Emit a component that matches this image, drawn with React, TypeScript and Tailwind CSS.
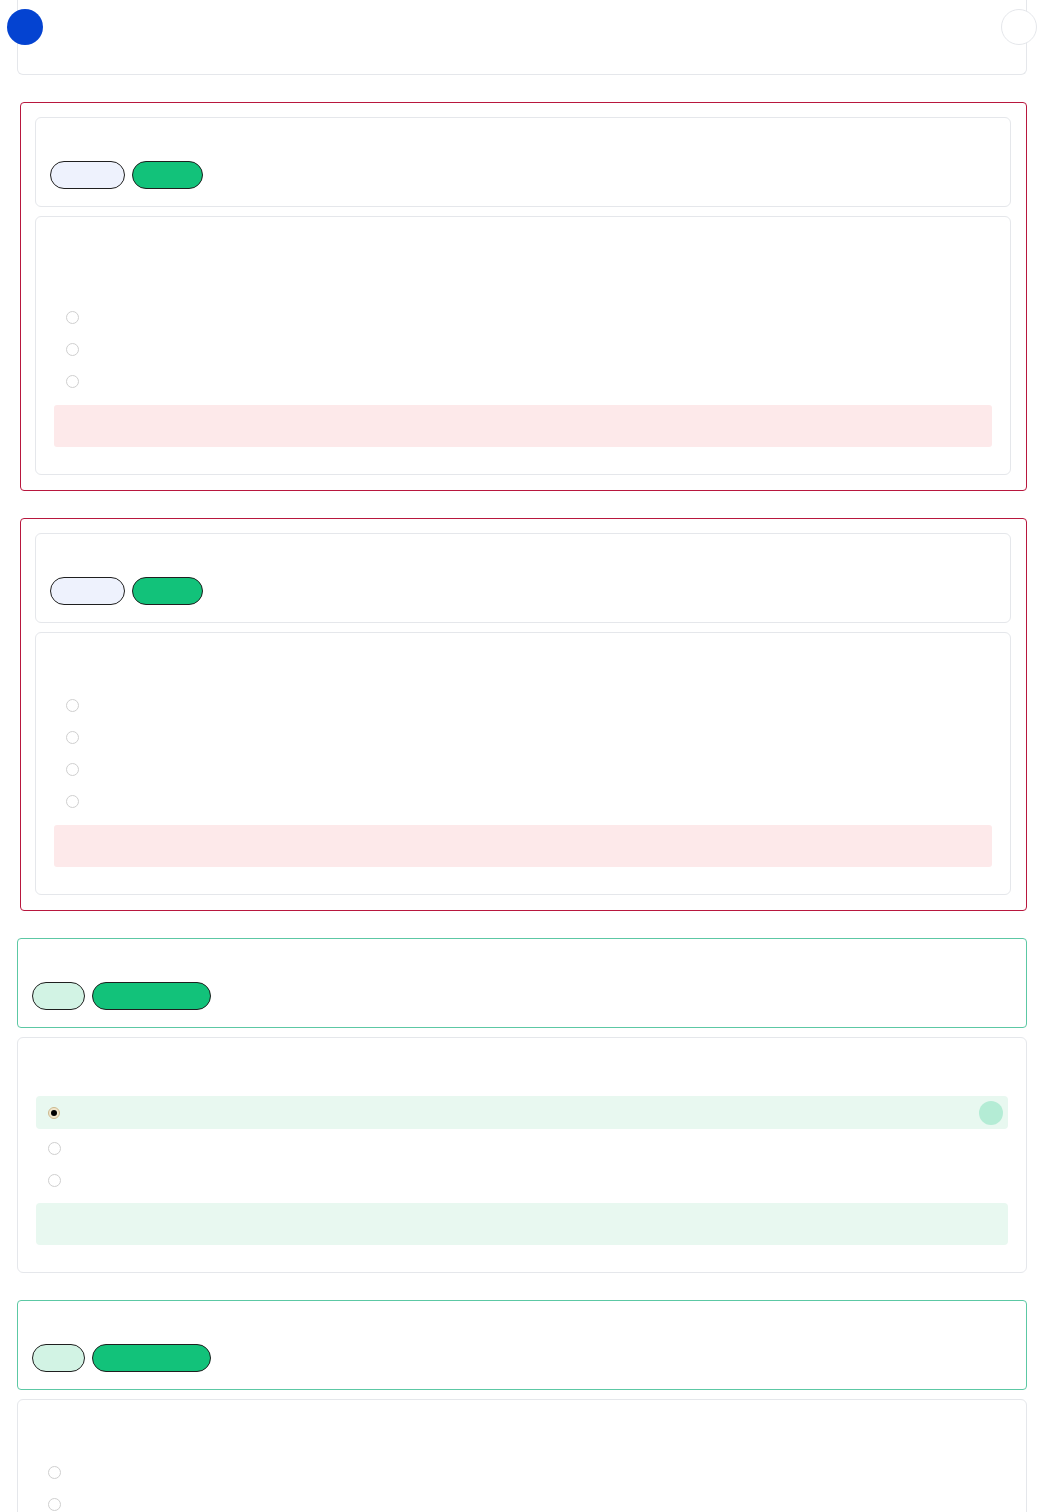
import React from "react";

type Tone = "wrong" | "right";

type Question = {
  tone: Tone;
  spacer: string;
  options: number;
  selected?: boolean;
};

const questions: Question[] = [
  { tone: "wrong", spacer: "h-[66px]", options: 3 },
  { tone: "wrong", spacer: "h-[38px]", options: 4 },
  { tone: "right", spacer: "h-[40px]", options: 3, selected: true },
  { tone: "right", spacer: "h-[38px]", options: 4 },
];

const Radio = ({ checked }: { checked?: boolean }) =>
  checked ? (
    <span className="flex h-[12px] w-[12px] items-center justify-center rounded-full border border-[#cdb98e] bg-[#f1e6cc]">
      <span className="h-[6px] w-[6px] rounded-full bg-black" />
    </span>
  ) : (
    <span className="h-[13px] w-[13px] rounded-full border border-[#cfcfcf] bg-white" />
  );

const QuestionHead = ({ tone }: { tone: Tone }) => (
  <div
    className={
      tone === "wrong"
        ? "h-[90px] rounded-md border border-gray-200 bg-white pl-[14px] pt-[43px]"
        : "h-[90px] rounded-[4px] border border-[#5cc8a4] bg-white pl-[14px] pt-[43px]"
    }
  >
    <div className="flex gap-[7px]">
      {tone === "wrong" ? (
        <>
          <span className="h-[28px] w-[75px] rounded-full border border-[#1f1f1f] bg-[#eef2fd]" />
          <span className="h-[28px] w-[71px] rounded-full border border-[#1f1f1f] bg-[#12c27a]" />
        </>
      ) : (
        <>
          <span className="h-[28px] w-[53px] rounded-full border border-[#1f1f1f] bg-[#d2f3e4]" />
          <span className="h-[28px] w-[119px] rounded-full border border-[#1f1f1f] bg-[#12c27a]" />
        </>
      )}
    </div>
  </div>
);

const OptionsCard = ({ q }: { q: Question }) => (
  <div className="rounded-md border border-gray-200 bg-white px-[18px] pb-[27px] pt-[18px]">
    <div className={q.spacer} />
    <div className="flex flex-col">
      {Array.from({ length: q.options }).map((_, i) =>
        q.selected && i === 0 ? (
          <div
            key={i}
            className="mb-[3px] flex h-[33px] items-center justify-between rounded-[4px] bg-[#e8f8f0] pl-[12px] pr-[5px]"
          >
            <Radio checked />
            <span className="h-[24px] w-[24px] rounded-full bg-[#b4ecd5]" />
          </div>
        ) : (
          <div key={i} className="flex h-8 items-center pl-[12px]">
            <Radio />
          </div>
        )
      )}
    </div>
    <div
      className={
        q.tone === "wrong"
          ? "mt-2 h-[42px] rounded-[3px] bg-[#fde9ea]"
          : "mt-[7px] h-[42px] rounded-[4px] bg-[#e8f8f0]"
      }
    />
  </div>
);

export default function App() {
  return (
    <div className="relative min-h-screen bg-white px-[17px] pb-10 font-['Liberation_Sans',sans-serif]">
      <span className="absolute left-[7px] top-[9px] z-10 h-[36px] w-[36px] rounded-full bg-[#0443d1]" />
      <span className="absolute left-[1001px] top-[9px] z-10 h-[36px] w-[36px] rounded-full border border-gray-200 bg-white" />
      <div className="flex flex-col gap-[27px]">
        <div className="h-[75px] rounded-b-md border border-t-0 border-gray-200 bg-white" />
        {questions.map((q, i) =>
          q.tone === "wrong" ? (
            <div
              key={i}
              className="ml-[3px] flex flex-col gap-[9px] rounded-[4px] border border-[#b8173e] pb-[15px] pl-[14px] pr-[15px] pt-[14px]"
            >
              <QuestionHead tone={q.tone} />
              <OptionsCard q={q} />
            </div>
          ) : (
            <div key={i} className="flex flex-col gap-[9px]">
              <QuestionHead tone={q.tone} />
              <OptionsCard q={q} />
            </div>
          )
        )}
      </div>
    </div>
  );
}
